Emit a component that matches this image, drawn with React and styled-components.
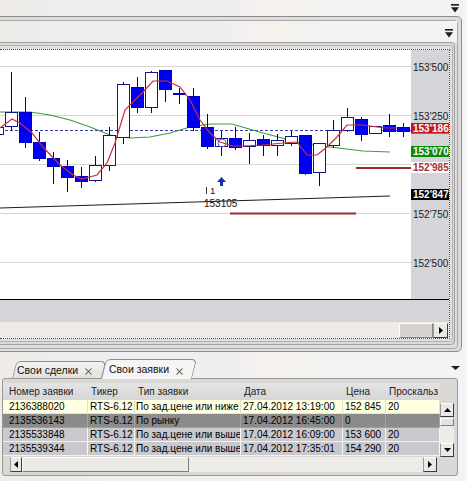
import React from "react";
import styled, { createGlobalStyle } from "styled-components";
import { X } from "lucide-react";

const GlobalStyle = createGlobalStyle`
  * { box-sizing: border-box; }
  html, body { margin: 0; padding: 0; }
  body {
    background: #efede9;
    font-family: "Liberation Sans", Arial, sans-serif;
    overflow: hidden;
  }
`;

const barBg = `linear-gradient(90deg, #efece8 0%, #eeedf0 22%, #efefef 50%, #f6f0f0 56%, #f5f3ec 62%, #f3f2f5 72%, #f4f2f5 100%)`;

// price -> y in page pixels (grid: 250 pts per 49px)
const py = (p) => 115.5 + ((153250 - p) * 49) / 250;

// [centerX, filled, bodyTop, bodyBottom, wickTop, wickBottom]
const candles = [
  [-3, 0, 127, 134, 125, 137],
  [11, 0, 112, 126, 72, 130],
  [25, 1, 112, 142, 97, 147],
  [39, 1, 142, 158, 132, 160],
  [53, 1, 158, 166, 152, 183],
  [67, 1, 166, 177, 160, 191],
  [81, 1, 176, 181, 167, 187],
  [95, 0, 165, 180, 156, 181],
  [109, 0, 135, 165, 127, 170],
  [123, 0, 84, 137, 82, 143],
  [137, 1, 87, 107, 77, 112],
  [151, 0, 72, 107, 71, 112],
  [165, 1, 70, 89, 70, 101],
  [179, 1, 93, 94, 88, 103],
  [193, 1, 96, 127, 88, 130],
  [207, 1, 127, 146, 114, 148],
  [221, 0, 138, 146, 131, 155],
  [235, 1, 138, 147, 127, 149],
  [249, 0, 140, 146, 133, 163],
  [263, 1, 139, 145, 135, 155],
  [277, 0, 140, 145, 134, 155],
  [291, 0, 136, 143, 131, 145],
  [305, 1, 135, 173, 135, 174],
  [319, 0, 143, 172, 143, 185],
  [333, 0, 130, 145, 120, 147],
  [347, 0, 117, 130, 108, 131],
  [361, 1, 119, 134, 117, 140],
  [375, 0, 126, 133, 126, 133],
  [389, 1, 125, 131, 114, 136],
  [403, 1, 127, 131, 123, 136],
];

const fastMa = [
  [0, 128], [12, 119], [20, 123], [32, 133], [43, 147], [60, 165], [73, 175], [82, 179],
  [97, 175], [107, 163], [115, 143], [125, 110], [133, 102], [143, 92], [153, 81], [167, 81],
  [180, 87], [190, 100], [200, 120], [210, 133], [220, 142], [233, 146], [243, 146],
  [263, 145], [283, 143], [297, 142], [307, 155], [317, 155], [327, 147], [337, 137],
  [347, 125], [363, 125], [377, 127], [387, 128], [397, 128],
];

const slowMa = [
  [0, 112], [30, 112], [50, 115], [70, 120], [90, 127], [110, 135], [130, 138], [150, 137],
  [170, 133], [190, 127], [210, 124], [232, 124], [263, 133], [297, 142], [313, 145],
  [330, 147], [363, 151], [390, 152],
];

const axisLabels = [
  { price: 153500, text: "153'500" },
  { price: 153250, text: "153'250" },
  { price: 152750, text: "152'750" },
  { price: 152500, text: "152'500" },
  { price: 153186, text: "153'186", kind: "last" },
  { price: 153070, text: "153'070", kind: "ma" },
  { price: 152985, text: "152'985", kind: "order" },
  { price: 152847, text: "152'847", kind: "trend" },
];

const columns = [
  { title: "Номер заявки", width: 85, pad: 6 },
  { title: "Тикер", width: 47, pad: 2 },
  { title: "Тип заявки", width: 106, pad: 1 },
  { title: "Дата", width: 102, pad: 2 },
  { title: "Цена", width: 43, pad: 2 },
  { title: "Проскальз", width: 54, pad: 2 },
];

const orders = [
  { tone: "current", cells: ["2136388020", "RTS-6.12", "По зад.цене или ниже", "27.04.2012 13:19:00", "152 845", "20"] },
  { tone: "selected", cells: ["2135536143", "RTS-6.12", "По рынку", "17.04.2012 16:45:00", "0", ""] },
  { tone: "plain", cells: ["2135533848", "RTS-6.12", "По зад.цене или выше", "17.04.2012 16:09:00", "153 600", "20"] },
  { tone: "plain", cells: ["2135539344", "RTS-6.12", "По зад.цене или выше", "17.04.2012 17:35:01", "154 290", "20"] },
];

const Screen = styled.div`
  width: 467px;
  height: 481px;
  overflow: hidden;
  display: flex;
  flex-direction: column;
  background: ${barBg};
`;

const TitleBar = styled.div`
  flex: none;
  height: ${(p) => p.$h}px;
  display: flex;
  align-items: flex-start;
  justify-content: flex-end;
  padding-top: ${(p) => p.$pt}px;
  padding-right: ${(p) => p.$pr}px;
  background: ${barBg};
`;

const OuterFrame = styled.div`
  flex: none;
  margin: 0 5px 0 -11px;
  padding: 3px 3px 2px 3px;
  border: 1px solid #8c8c8c;
  border-radius: 0 5px 5px 0;
  background: #dedcda;
`;

const PaneFrame = styled.div`
  display: flex;
  flex-direction: column;
  border: 1px solid #a9a9a9;
  border-radius: 0 4px 4px 0;
  background: #dfdddb;
`;

const InnerFrame = styled.div`
  margin: 0 2px 3px 0;
  padding: 2px 1px 2px 2px;
  border: 1px solid #a0a0a0;
  border-radius: 0 4px 4px 0;
  background: #dcdad8;
`;

const CoreFrame = styled.div`
  padding: 3px 2px 2px 2px;
  border: 1px solid #b3b3b3;
  border-radius: 0 3px 3px 0;
  background: #e2e0de;
`;

const ChartBox = styled.div`
  border-top: 1px dotted #4a4a4a;
  border-right: 1px dotted #4a4a4a;
  border-bottom: 1px dotted #4a4a4a;
  background: #fff;
`;

const PlotRow = styled.div`
  display: flex;
  height: 249px;
`;

const Plot = styled.div`
  flex: 1;
  background: #fff;
  overflow: hidden;
  svg { display: block; }
`;

const Axis = styled.div`
  position: relative;
  width: 38px;
  flex: none;
  background: #d5d4d9;
  overflow: hidden;
`;

const labelTone = {
  plain: "background: transparent; color: #1a1a1a;",
  last: "background: #c0161c; color: #fff; font-weight: bold; border-bottom: 1px solid #7f68c8;",
  ma: "background: #0b8a0b; color: #fff; font-weight: bold;",
  order: "background: #fff; color: #a8302e; font-weight: bold;",
  trend: "background: #000; color: #fff; font-weight: bold;",
};

const AxisLabel = styled.div`
  position: absolute;
  left: 0;
  right: 0;
  height: 11px;
  line-height: 11px;
  padding-left: 2px;
  font-size: 10px;
  white-space: nowrap;
  ${(p) => labelTone[p.$kind || "plain"]}
`;

const TimeStrip = styled.div`
  height: 23px;
  border-top: 1px solid #000;
  background: #d5d4d9;
`;

const ScrollRow = styled.div`
  height: 16px;
  display: flex;
  justify-content: flex-end;
  padding: 1px 1px 0 0;
  background: #eeebe6;
`;

const Thumb = styled.div`
  width: ${(p) => p.$w}px;
  flex: none;
  background: #d6d3ce;
  border: 1px solid;
  border-color: #fbfbfb #8a8a8a #8a8a8a #fbfbfb;
`;

const ArrowButton = styled.div`
  width: ${(p) => p.$w}px;
  height: ${(p) => p.$h || 15}px;
  flex: none;
  display: flex;
  align-items: center;
  justify-content: center;
  background: #ebe9e5;
  border: 1px solid;
  border-color: #fdfdfd #3c3c3c #3c3c3c #9a9a9a;
`;

const BottomPanel = styled.div`
  flex: 1;
  display: flex;
  flex-direction: column;
  background: ${barBg};
`;

const TabStrip = styled.div`
  position: relative;
  height: 26px;
  flex: none;
  display: flex;
  align-items: flex-end;
  padding-left: 12px;
`;

const Tab = styled.div`
  position: relative;
  z-index: ${(p) => (p.$active ? 2 : 1)};
  width: ${(p) => (p.$active ? 91 : 90)}px;
  height: ${(p) => (p.$active ? 20 : 17)}px;
  margin-bottom: ${(p) => (p.$active ? -1 : 0)}px;
  margin-left: ${(p) => (p.$active ? -1 : 0)}px;
  display: flex;
  align-items: center;
  justify-content: space-between;
  padding: 0 ${(p) => (p.$active ? 7 : 8)}px 0 ${(p) => (p.$active ? 8 : 5)}px;
  font-size: 10.5px;
  color: #111;

  &::before {
    content: "";
    position: absolute;
    inset: 0;
    z-index: -1;
    border: 1px solid #8e8e8e;
    border-bottom: none;
    border-radius: 5px 5px 0 0;
    transform: skewX(-14deg);
    transform-origin: bottom left;
    background: ${(p) => (p.$active ? "#f6f5f3" : "linear-gradient(#f3f2f0, #e4e2de)")};
  }

  svg { margin-top: 4px; color: #4a4a4a; }
`;

const PanelMenu = styled.div`
  position: absolute;
  right: 7px;
  top: 13px;
  line-height: 0;
`;

const TableFrame = styled.div`
  flex: none;
  height: 98px;
  margin: 0 9px 0 2px;
  padding: 4px 3px 3px 0;
  border: 1px solid #989898;
  border-radius: 3px;
  background: #dad8d4;
  display: grid;
  grid-template-columns: 437px 14px;
  grid-template-rows: 74px 15px;
`;

const GridBody = styled.div`
  overflow: hidden;
  font-size: 10px;
`;

const Row = styled.div`
  display: grid;
  grid-template-columns: ${columns.map((c) => c.width + "px").join(" ")};
  height: ${(p) => (p.$head ? 17 : 14)}px;
  line-height: ${(p) => (p.$head ? 17 : 13)}px;
  background: ${(p) =>
    p.$head
      ? "linear-gradient(#e4e4e4, #d6d6d6)"
      : p.$tone === "current"
      ? "#ffffe1"
      : p.$tone === "selected"
      ? "#8b8b8b"
      : "#c9c8cd"};
  color: ${(p) => (p.$head ? "#222" : "#000")};
  border-bottom: ${(p) =>
    p.$head ? "none" : `1px solid ${p.$tone === "current" ? "#e4e4d4" : p.$tone === "selected" ? "#9e9e9e" : "#f2f2f2"}`};
`;

const Cell = styled.div`
  overflow: hidden;
  white-space: nowrap;
  padding-left: ${(p) => p.$pad}px;
  border-right: 1px solid ${(p) => p.$sep};
`;

const VScroll = styled.div`
  grid-column: 2;
  grid-row: 1;
  margin-top: 17px;
  padding-top: 3px;
  display: flex;
  flex-direction: column;
`;

const VThumb = styled.div`
  height: 8px;
  margin-top: 1px;
  background: #e4e2de;
  border: 1px solid;
  border-color: #fdfdfd #7e7e7e #7e7e7e #fdfdfd;
`;

const Track = styled.div`
  flex: 1;
  background: #eeece8;
`;

const HScroll = styled.div`
  grid-column: 1;
  grid-row: 2;
  display: flex;
  padding: 0 3px 0 7px;
`;

const HThumb = styled.div`
  width: 167px;
  flex: none;
  background: #eceae6;
  border: 1px solid;
  border-color: #fdfdfd #7e7e7e #7e7e7e #fdfdfd;
`;

function MenuGlyph({ bar }) {
  return bar ? (
    <svg width="8" height="9" viewBox="0 0 8 9">
      <rect x="0" y="0" width="8" height="1.6" fill="#1e1e1e" />
      <path d="M0 3.2 H8 L4 8.6 Z" fill="#1e1e1e" />
    </svg>
  ) : (
    <svg width="9" height="4" viewBox="0 0 9 4">
      <path d="M0 0 H9 L4.5 4 Z" fill="#1e1e1e" />
    </svg>
  );
}

function Arrow({ dir }) {
  const d = {
    right: "M0 0 L4 3.5 L0 7 Z",
    left: "M4 0 L0 3.5 L4 7 Z",
    up: "M0 4 L3.5 0 L7 4 Z",
    down: "M0 0 L7 0 L3.5 4 Z",
  }[dir];
  const horizontal = dir === "left" || dir === "right";
  return (
    <svg width={horizontal ? 4 : 7} height={horizontal ? 7 : 4} viewBox={horizontal ? "0 0 4 7" : "0 0 7 4"}>
      <path d={d} fill="#000" />
    </svg>
  );
}

function PriceChart() {
  const pts = (list) => list.map(([x, y]) => `${x},${y}`).join(" ");
  return (
    <svg width="411" height="249" viewBox="0 50 411 249">
      {[153500, 153250, 153000, 152750, 152500].map((p) => (
        <line key={p} x1="0" x2="411" y1={py(p)} y2={py(p)} stroke="#d6d6d6" />
      ))}
      <line x1="0" x2="411" y1="130.5" y2="130.5" stroke="#3a3aa8" strokeDasharray="3 2" />
      <polyline points={pts(slowMa)} fill="none" stroke="#3d9c3d" strokeWidth="1.2" />
      {candles.map(([x, f, bt, bb, wt, wb], i) => (
        <g key={i} shapeRendering="crispEdges">
          <line x1={x + 0.5} x2={x + 0.5} y1={wt} y2={wb + 1} stroke="#00007a" />
          <rect
            x={x - 5.5}
            y={bt + 0.5}
            width="12"
            height={Math.max(bb - bt, 1)}
            fill={f ? "#0000f2" : "#fff"}
            stroke={f ? "#0000c4" : "#15158a"}
          />
        </g>
      ))}
      <polyline points={pts(fastMa)} fill="none" stroke="#c8303a" strokeWidth="1.2" />
      <circle cx="222" cy="143" r="4" fill="none" stroke="#5858d0" />
      <line x1="0" y1="208" x2="390" y2="196" stroke="#1c1c1c" />
      <line x1="230" x2="356" y1="213.5" y2="213.5" stroke="#9a2c2c" strokeWidth="2" />
      <line x1="356" x2="411" y1="168" y2="168" stroke="#9a2c2c" strokeWidth="2" />
      <path d="M221.5 177 L226 182 L223 182 L223 186 L220 186 L220 182 L217 182 Z" fill="#1a2fa8" />
      <line x1="206.5" x2="206.5" y1="187" y2="194" stroke="#333" />
      <text x="210" y="194" fontSize="9.5" fill="#111" fontFamily="Liberation Sans, Arial, sans-serif">1</text>
      <text x="204" y="207" fontSize="10" fill="#111" fontFamily="Liberation Sans, Arial, sans-serif">153105</text>
    </svg>
  );
}

export default function App() {
  return (
    <>
      <GlobalStyle />
      <Screen>
        <TitleBar $h={16} $pt={4} $pr={8}>
          <MenuGlyph bar />
        </TitleBar>
        <OuterFrame>
          <PaneFrame>
            <TitleBar $h={21} $pt={8} $pr={4}>
              <MenuGlyph bar />
            </TitleBar>
            <InnerFrame>
              <CoreFrame>
                <ChartBox>
                  <PlotRow>
                    <Plot>
                      <PriceChart />
                    </Plot>
                    <Axis>
                      {axisLabels.map((l) => (
                        <AxisLabel
                          key={l.text}
                          $kind={l.kind}
                          style={{ top: Math.round(py(l.price) - 5) - 50 }}
                        >
                          {l.text}
                        </AxisLabel>
                      ))}
                    </Axis>
                  </PlotRow>
                  <TimeStrip />
                  <ScrollRow>
                    <Thumb $w={34} />
                    <ArrowButton $w={15}>
                      <Arrow dir="right" />
                    </ArrowButton>
                  </ScrollRow>
                </ChartBox>
              </CoreFrame>
            </InnerFrame>
          </PaneFrame>
        </OuterFrame>

        <BottomPanel>
          <TabStrip>
            <Tab>
              <span>Свои сделки</span>
              <X size={11} strokeWidth={2.2} />
            </Tab>
            <Tab $active>
              <span>Свои заявки</span>
              <X size={11} strokeWidth={2.2} />
            </Tab>
            <PanelMenu>
              <MenuGlyph />
            </PanelMenu>
          </TabStrip>

          <TableFrame>
            <GridBody>
              <Row $head>
                {columns.map((c, i) => (
                  <Cell key={c.title} $pad={i === 0 ? 6 : 3} $sep="transparent">
                    {c.title}
                  </Cell>
                ))}
              </Row>
              {orders.map((o) => (
                <Row key={o.cells[0]} $tone={o.tone}>
                  {o.cells.map((v, i) => (
                    <Cell
                      key={i}
                      $pad={columns[i].pad}
                      $sep={o.tone === "current" ? "#e0e0d0" : o.tone === "selected" ? "#a4a4a4" : "#f6f6f6"}
                    >
                      {v}
                    </Cell>
                  ))}
                </Row>
              ))}
            </GridBody>
            <VScroll>
              <ArrowButton $w={14} $h={14}>
                <Arrow dir="up" />
              </ArrowButton>
              <VThumb />
              <Track />
              <ArrowButton $w={14} $h={14}>
                <Arrow dir="down" />
              </ArrowButton>
            </VScroll>
            <HScroll>
              <ArrowButton $w={12}>
                <Arrow dir="left" />
              </ArrowButton>
              <HThumb />
              <Track />
              <ArrowButton $w={14}>
                <Arrow dir="right" />
              </ArrowButton>
            </HScroll>
          </TableFrame>
        </BottomPanel>
      </Screen>
    </>
  );
}
